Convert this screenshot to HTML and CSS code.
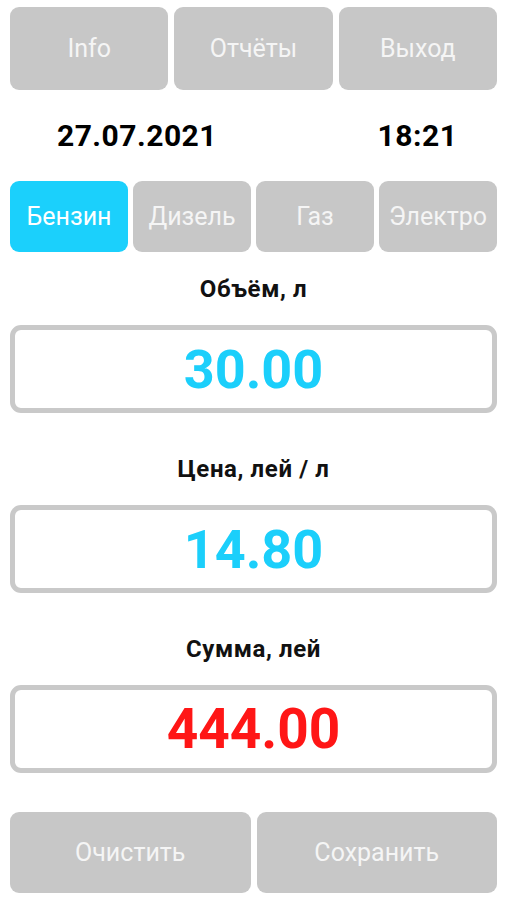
FILE: index.html
```html
<!DOCTYPE html>
<html lang="ru">
<head>
    <meta charset="UTF-8">
    <meta name="viewport" content="width=device-width, initial-scale=1.0">
    <title>Заправка</title>
    <link rel="stylesheet" href="styles.css">
</head>
<body>
    <div class="app">
        <!-- Верхнее меню -->
        <div class="menu">
            <button class="btn">Info</button>
            <button class="btn">Отчёты</button>
            <button class="btn">Выход</button>
        </div>

        <div class="datetime">
            <span class="date">27.07.2021</span>
            <span class="time">18:21</span>
        </div>

        <!-- Вид топлива -->
        <div class="fuel">
            <button class="btn active">Бензин</button>
            <button class="btn">Дизель</button>
            <button class="btn">Газ</button>
            <button class="btn">Электро</button>
        </div>

        <h2 class="label first">Объём, л</h2>
        <div class="field blue">30.00</div>

        <h2 class="label">Цена, лей / л</h2>
        <div class="field blue">14.80</div>

        <h2 class="label">Сумма, лей</h2>
        <div class="field red">444.00</div>

        <div class="actions">
            <button class="btn">Очистить</button>
            <button class="btn">Сохранить</button>
        </div>
    </div>
</body>
</html>
```

FILE: styles.css
```css
/* Сброс */
* {
    margin: 0;
    padding: 0;
    box-sizing: border-box;
}

body {
    font-family: 'Roboto', 'Liberation Sans', sans-serif;
    background-color: #fff;
    color: #111;
}

.app {
    width: 506px;
    padding: 7px 9px 0 10px;
}

/* Кнопки */
.btn {
    border: none;
    border-radius: 9px;
    background-color: #c7c7c7;
    color: #f5f5f5;
    font-family: 'Roboto', 'Liberation Sans', sans-serif;
    font-size: 25px;
    cursor: pointer;
}

.btn.active {
    background-color: #1bd0fc;
    color: #fff;
}

.menu {
    display: grid;
    grid-template-columns: repeat(3, 1fr);
    gap: 6px;
    height: 83px;
}

.datetime {
    display: flex;
    justify-content: space-between;
    align-items: center;
    height: 91px;
    font-size: 30px;
    font-weight: bold;
    letter-spacing: 0.5px;
    color: #000;
}

.date {
    width: 254px;
    text-align: center;
}

.time {
    width: 159px;
    text-align: center;
}

.fuel {
    display: grid;
    grid-template-columns: repeat(4, 1fr);
    gap: 5px;
    height: 71px;
}

/* Поля */
.label {
    font-size: 24px;
    font-weight: bold;
    letter-spacing: 0.6px;
    line-height: 26px;
    text-align: center;
    margin: 43px 0 23px;
}

.label.first {
    margin-top: 24px;
}

.field {
    height: 88px;
    border: 5px solid #c9c9c9;
    border-radius: 11px;
    display: flex;
    align-items: center;
    justify-content: center;
    font-size: 54px;
    font-weight: bold;
}

.field.blue {
    color: #1bcffb;
}

.field.red {
    color: #ff1616;
    font-size: 55px;
}

.actions {
    display: grid;
    grid-template-columns: repeat(2, 1fr);
    gap: 6px;
    height: 81px;
    margin-top: 39px;
}
```
